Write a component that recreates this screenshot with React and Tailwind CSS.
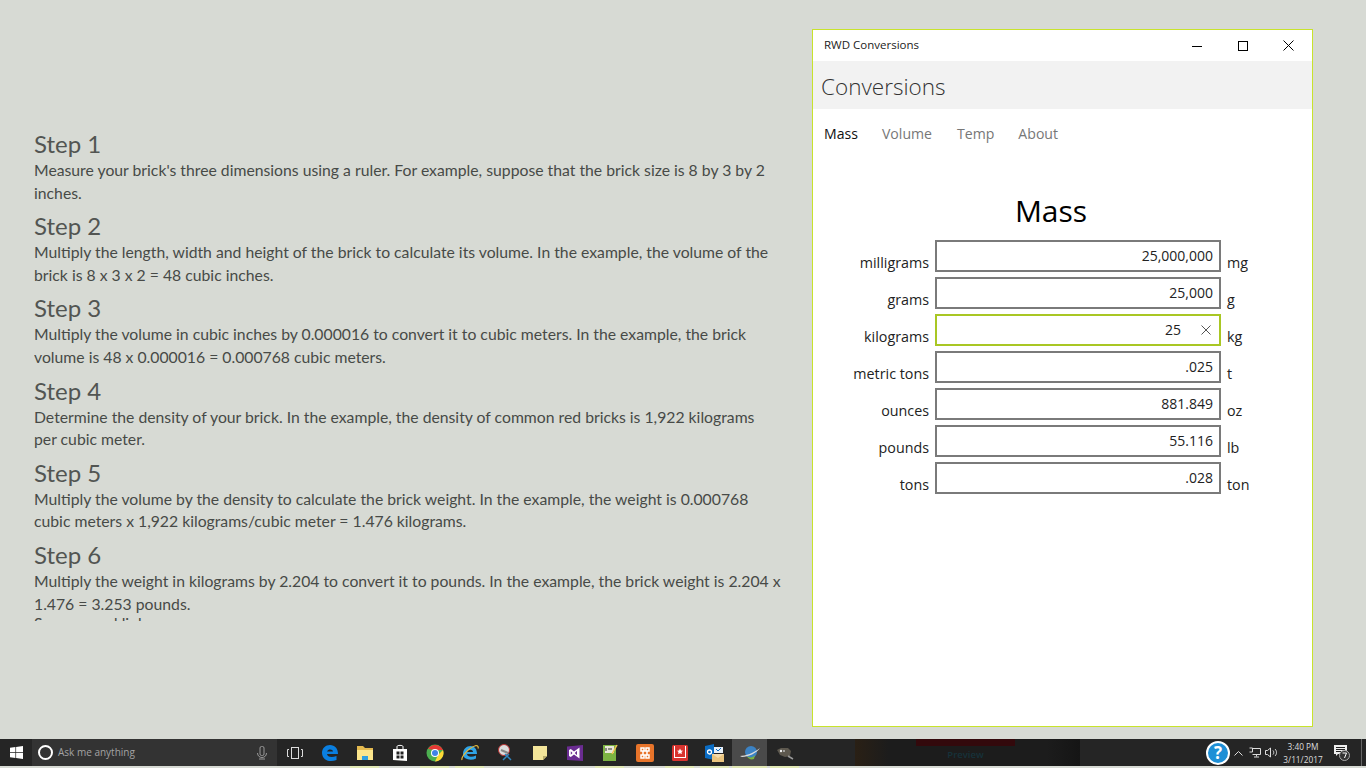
import React from "react";

const steps = [
  {
    title: "Step 1",
    lines: ["Measure your brick's three dimensions using a ruler. For example, suppose that the brick size is 8 by 3 by 2", "inches."],
  },
  {
    title: "Step 2",
    lines: ["Multiply the length, width and height of the brick to calculate its volume. In the example, the volume of the", "brick is 8 x 3 x 2 = 48 cubic inches."],
  },
  {
    title: "Step 3",
    lines: ["Multiply the volume in cubic inches by 0.000016 to convert it to cubic meters. In the example, the brick", "volume is 48 x 0.000016 = 0.000768 cubic meters."],
  },
  {
    title: "Step 4",
    lines: ["Determine the density of your brick. In the example, the density of common red bricks is 1,922 kilograms", "per cubic meter."],
  },
  {
    title: "Step 5",
    lines: ["Multiply the volume by the density to calculate the brick weight. In the example, the weight is 0.000768", "cubic meters x 1,922 kilograms/cubic meter = 1.476 kilograms."],
  },
  {
    title: "Step 6",
    lines: ["Multiply the weight in kilograms by 2.204 to convert it to pounds. In the example, the brick weight is 2.204 x", "1.476 = 3.253 pounds."],
  },
];

const rows = [
  { label: "milligrams", value: "25,000,000", unit: "mg" },
  { label: "grams", value: "25,000", unit: "g" },
  { label: "kilograms", value: "25", unit: "kg", focus: true },
  { label: "metric tons", value: ".025", unit: "t" },
  { label: "ounces", value: "881.849", unit: "oz" },
  { label: "pounds", value: "55.116", unit: "lb" },
  { label: "tons", value: ".028", unit: "ton" },
];

function Article() {
  return (
    <div className="h-[739px] w-[812px] pl-[34px] pr-[30px] pt-[126px]">
      <div className="h-[495px] overflow-hidden font-['Lato',sans-serif] text-[#474a47]">
        {steps.map((s) => (
          <div key={s.title} className="h-[82.2px]">
            <h3 className="h-[33px] text-[24px] leading-[36px] text-[#525552]">{s.title}</h3>
            {s.lines.map((l) => (
              <p key={l} className="h-[22.6px] whitespace-nowrap text-[15.75px] leading-[22.6px]">{l}</p>
            ))}
          </div>
        ))}
        <p className="-mt-[7px] text-[15.75px] leading-[22.6px]">Sources and links</p>
      </div>
    </div>
  );
}

function ConvertRow({ row }) {
  return (
    <div className="flex h-[32px] items-start">
      <div className="w-[122px] pr-[6px] pt-[12px] text-right text-[14.3px] leading-[22px] text-[#222]">{row.label}</div>
      <div className={`flex h-[32px] w-[286px] items-center justify-end border-2 bg-white pb-[2px] text-[14px] text-[#222] ${row.focus ? "border-[#a9c724]" : "border-[#7a7a7a]"}`}>
        <span className={row.focus ? "pr-[12px]" : "pr-[6px]"}>{row.value}</span>
        {row.focus && (
          <span className="flex w-[26px] justify-center pt-[2px]">
            <svg width="10" height="10" viewBox="0 0 10 10" fill="none" stroke="#555" strokeWidth="1">
              <path d="M0.5 0.5 9.5 9.5M9.5 0.5 0.5 9.5" />
            </svg>
          </span>
        )}
      </div>
      <div className="pl-[6px] pt-[12px] text-[14.3px] leading-[22px] text-[#222]">{row.unit}</div>
    </div>
  );
}

function ConversionsWindow() {
  return (
    <div className="mt-[29px] h-[698px] w-[501px] border border-[#c8e32c] bg-white font-['Open_Sans',sans-serif]">
      <div className="flex h-[31px] items-center justify-between">
        <span className="pb-[2px] pl-[11px] text-[11.5px] text-[#222]">RWD Conversions</span>
        <div className="flex items-center">
          <div className="flex w-[46px] justify-center">
            <svg width="10" height="10" viewBox="0 0 10 10" stroke="#000" fill="none"><path d="M0 5.500h10" /></svg>
          </div>
          <div className="flex w-[46px] justify-center">
            <svg width="10" height="10" viewBox="0 0 10 10" stroke="#000" fill="none"><rect x="0.5" y="0.5" width="9" height="9" /></svg>
          </div>
          <div className="flex w-[46px] justify-center pr-[1px]">
            <svg width="11" height="11" viewBox="0 0 11 11" stroke="#000" fill="none"><path d="M0.5 0.5 10.5 10.5M10.5 0.5 0.5 10.5" /></svg>
          </div>
        </div>
      </div>
      <div className="flex h-[48px] items-center bg-[#f2f2f2] pl-[8px] pt-[4px] text-[22.5px] font-light text-[#333]">Conversions</div>
      <div className="flex h-[50px] items-center gap-[24px] pl-[11px] text-[14.1px] text-[#777]">
        <span className="text-[#111]">Mass</span>
        <span>Volume</span>
        <span className="pl-[1px]">Temp</span>
        <span>About</span>
      </div>
      <div className="w-[476px] pt-[31px] text-center text-[30px] leading-[42px] text-black">Mass</div>
      <div className="mt-[8px] flex flex-col gap-[5px]">
        {rows.map((r) => (
          <ConvertRow key={r.label} row={r} />
        ))}
      </div>
    </div>
  );
}

// taskbar app icons, drawn small
const appIcons = [
  <svg key="taskview" width="16" height="14" viewBox="0 0 16 14" fill="none" stroke="#ddd"><rect x="4.500" y="1.500" width="7" height="11" /><path d="M2 3.500H.5v7H2M14 3.500h1.500v7H14" /></svg>,
  <svg key="edge" width="18" height="18" viewBox="0 0 18 18"><path d="M1 9C1 4 4.500 1 9 1c5 0 8 3.500 8 9H6c.3 3 4.500 4 9.500 2v4c-6 2.500-14 1-14.500-7z" fill="#0a7fe0" /><path d="M6 7.500h6C12 5 7 4.500 6 7.500z" fill="#222" /></svg>,
  <svg key="folder" width="18" height="16" viewBox="0 0 18 16"><path d="M1 1h6l2 2h8v12H1z" fill="#e3b94f" /><path d="M1 5h16v10H1z" fill="#fbe58c" /><path d="M6 15v-4h6v4z" fill="#2f9fe0" /></svg>,
  <svg key="store" width="16" height="18" viewBox="0 0 16 18"><path d="M1 5h14v12l-14-1z" fill="#fff" /><path d="M5 5V2.500C5 1 11 1 11 2.500V5" fill="none" stroke="#fff" /><path d="M4.500 7.500h3v3h-3zM8.500 7.500h3v3h-3zM4.500 11.500h3v3h-3zM8.500 11.500h3v3h-3z" fill="#222" /></svg>,
  <svg key="chrome" width="18" height="18" viewBox="0 0 18 18"><circle cx="9" cy="9" r="8.500" fill="#4caf50" /><path d="M2 5A8.500 8.500 0 0 1 17 6H9z" fill="#e53935" /><path d="M17 6a8.500 8.500 0 0 1-8 11.500L12 11z" fill="#fdd835" /><circle cx="9" cy="9" r="4" fill="#fff" /><circle cx="9" cy="9" r="3" fill="#3f83e8" /></svg>,
  <svg key="ie" width="18" height="18" viewBox="0 0 18 18"><path d="M2 10C2 5 5.500 2 9.500 2c4 0 6.500 3 6.500 8H6c.3 3 4.500 3.500 9 1.500v3C10 17 2 15.500 2 10z" fill="#2fa4e7" /><path d="M6 8h6c0-3-5.500-3-6 0z" fill="#222" /><path d="M1 16C0 13 7 4 15 1.500c2 0 2.500 1.500 2 3" fill="none" stroke="#e8b93a" strokeWidth="1.200" /></svg>,
  <svg key="snip" width="18" height="18" viewBox="0 0 18 18"><circle cx="8" cy="6" r="5.500" fill="#ddd" stroke="#b33" /><path d="M5 6l7 3" stroke="#888" strokeWidth="2" /><path d="M9 10l6 6M13 10l-6 6" stroke="#2f86c0" strokeWidth="1.500" /></svg>,
  <svg key="sticky" width="14" height="14" viewBox="0 0 14 14"><path d="M0 0h14v10l-4 4H0z" fill="#f3e59a" /><path d="M14 10h-4v4z" fill="#b9ad6a" /></svg>,
  <svg key="vs" width="16" height="16" viewBox="0 0 16 16"><path d="M0 1.500 16 0v16L0 15z" fill="#6a2c91" /><path d="M12.500 2.500v11L7 9.500 3.800 12 2 11V5l1.800-1L7 6.500zM10 5.800 7.800 8l2.200 2.200zM3.800 6.200v3.600L5.500 8z" fill="#fff" fillRule="evenodd" /></svg>,
  <svg key="notepad" width="16" height="18" viewBox="0 0 16 18"><path d="M1 1h13v16H1z" fill="#7cb342" /><path d="M3 2h9v7H3z" fill="#e8e8d8" /><path d="M4 4v3M6 5h4" stroke="#333" /><path d="M10 10 15 1" stroke="#f2c14e" strokeWidth="1.500" /></svg>,
  <svg key="xampp" width="18" height="18" viewBox="0 0 18 18"><rect width="18" height="18" rx="2" fill="#e8742a" /><path d="M5 4h3v3H5zM10 4h3v3h-3zM5 11h3v3H5zM10 11h3v3h-3zM7 7h4v4H7z" fill="none" stroke="#fff" strokeWidth="1.500" /></svg>,
  <svg key="bookmark" width="16" height="16" viewBox="0 0 16 16"><rect width="16" height="16" rx="1.500" fill="#d7342f" /><rect x="2" y="1" width="12" height="12" fill="#fff" /><rect x="3" y="1" width="10" height="11" fill="#d7342f" /><path d="M8 3.500l1 2 2 .2-1.500 1.400.4 2L8 8.200 6.100 9.100l.4-2L5 5.700l2-.2z" fill="#fff" /></svg>,
  <svg key="outlook" width="19" height="18" viewBox="0 0 19 18"><path d="M0 2l9-2v16l-9-2z" fill="#0a6cc4" /><circle cx="4.500" cy="8" r="2" fill="none" stroke="#fff" strokeWidth="1.300" /><path d="M9 3h9v6H9z" fill="#e8f1fa" /><path d="M11 5l2 2 3-3" stroke="#0a6cc4" fill="none" /><path d="M7 10h12v8H7z" fill="#eac47e" /><path d="M7 10l6 4 6-4" fill="#f5dcae" /></svg>,
  <svg key="globe" width="22" height="18" viewBox="0 0 22 18"><circle cx="12" cy="8" r="6" fill="#3b82c4" /><path d="M8 12c2 2 6 2 8-1l-1 4c-3 1-6 0-7-3z" fill="#7cb342" /><path d="M1 12c5 0 14-3 20-8-3 5-12 9-18 9z" fill="#ddd" /></svg>,
  <svg key="gimp" width="18" height="14" viewBox="0 0 18 14"><path d="M1 4l4-2 7 0 3 3-1 5-5 1-5-2z" fill="#5d584e" /><circle cx="5" cy="5" r="1.200" fill="#eee" /><circle cx="8" cy="5" r="1" fill="#bbb" /><path d="M12 10l5 3" stroke="#999" strokeWidth="1.500" /></svg>,
];

function Taskbar() {
  const underlined = [2, 4, 5, 9, 11, 12, 13, 14];
  return (
    <div className="h-[29px] bg-[#d7dad4]">
      <div className="flex h-[27px] items-center bg-[#252525] font-['Open_Sans',sans-serif]">
        <div className="flex w-[32px] justify-center">
          <svg width="13" height="13" viewBox="0 0 13 13" fill="#fff"><path d="M0 1.800 5.400 1v5.200H0zM6.100.9 13 0v6.200H6.100zM0 6.900h5.400v5.200L0 11.300zM6.100 6.900H13V13l-6.900-1z" /></svg>
        </div>
        <div className="flex h-full w-[245px] items-center bg-[#333] pl-[6px]">
          <span className="h-[15px] w-[15px] rounded-full border-2 border-white" />
          <span className="pl-[5px] text-[10px] text-[#a3a3a3]">Ask me anything</span>
          <svg className="ml-auto mr-[10px]" width="10" height="14" viewBox="0 0 10 14" fill="none" stroke="#999"><rect x="3" y="0.500" width="4" height="9" rx="1.500" /><path d="M.5 7c0 6 9 6 9 0M2 13h6" /></svg>
        </div>
        {appIcons.map((icon, i) => (
          <div key={i} className={`flex h-full w-[35px] items-center justify-center ${i === 13 ? "bg-[#4a4a4a]" : ""}`}>{icon}</div>
        ))}
        <div className="h-full w-[53px]" />
        {/* wallpaper showing through the taskbar */}
        <div className="flex h-full w-[225px] flex-col items-center bg-[linear-gradient(90deg,#2a2015,#1c1c1c_15%,#1c1c1c_85%,#151515)] pr-[4px]">
          <div className="h-[7px] w-[99px] bg-[#33090c]" />
          <span className="pt-[2px] text-[9.500px] font-semibold leading-[14px] text-[#16323a]">Preview</span>
        </div>
        <div className="flex-1" />
        <div className="flex h-[24px] w-[24px] items-center justify-center rounded-full border-2 border-white bg-[#1e8fd6] text-[17px] font-bold leading-none text-white">?</div>
        <svg className="ml-[4px]" width="9" height="6" viewBox="0 0 9 6" fill="none" stroke="#ddd"><path d="M.5 5.500 4.500 1.500 8.500 5.500" /></svg>
        <svg className="ml-[6px]" width="12" height="11" viewBox="0 0 12 11" fill="none" stroke="#ddd"><path d="M3.500 1.500h8v6h-8M0.500 1h3v4h-3M7.500 7.500v2M5 10h5" /></svg>
        <svg className="ml-[4px]" width="13" height="11" viewBox="0 0 13 11" fill="none" stroke="#ddd"><path d="M.5 3.500h2L5.500 1v9l-3-2.500h-2zM8 3.500c1 1 1 3 0 4M10 2c2 2 2 5 0 7" /></svg>
        <div className="ml-[2px] w-[46px] text-center text-[8.300px] leading-[13px] text-[#ddd]">
          <div>3:40 PM</div>
          <div>3/11/2017</div>
        </div>
        <div className="flex w-[32px] justify-center">
          <svg width="16" height="16" viewBox="0 0 16 16"><path d="M0 0h13v9H4l-2 2V9H0z" fill="#eee" /><path d="M2 2.500h9M2 4.500h9M2 6.500h6" stroke="#222" /><circle cx="10.500" cy="10.500" r="5" fill="#333" stroke="#aaa" /><path d="M8.500 8h4l-2 5" stroke="#fff" fill="none" /></svg>
        </div>
        <div className="h-full w-[8px]">
          <div className="ml-[3px] h-full w-px bg-[#666]" />
        </div>
      </div>
      <div className="flex h-[2px] pl-[277px]">
        {appIcons.map((_, i) => (
          <div key={i} className={`h-full w-[35px] ${i === 13 ? "" : "px-[3px]"}`}>
            <div className={`h-full ${underlined.includes(i) ? "bg-[#e1e8b5]" : ""}`} />
          </div>
        ))}
      </div>
    </div>
  );
}

export default function App() {
  return (
    <div className="h-[768px] w-[1366px] overflow-hidden bg-[#d7dad4]">
      <div className="flex h-[739px]">
        <Article />
        <ConversionsWindow />
      </div>
      <Taskbar />
    </div>
  );
}
